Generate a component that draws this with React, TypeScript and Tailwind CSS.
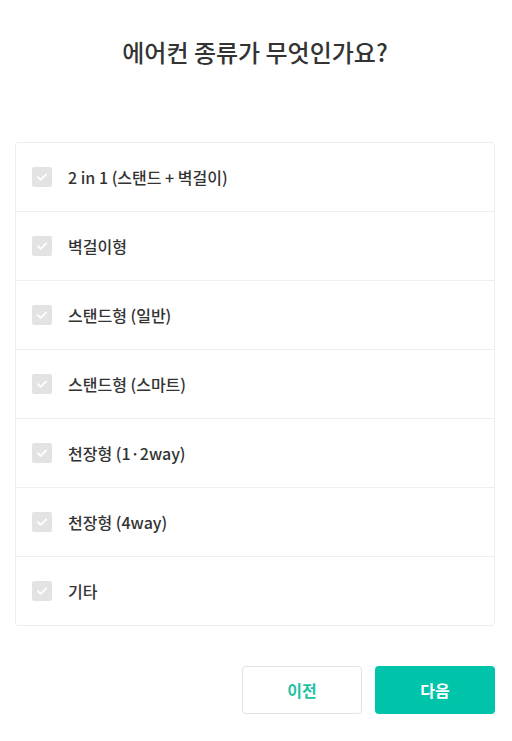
const options = [
  "2 in 1 (스탠드 + 벽걸이)",
  "벽걸이형",
  "스탠드형 (일반)",
  "스탠드형 (스마트)",
  "천장형 (1·2way)",
  "천장형 (4way)",
  "기타",
];

function CheckIcon() {
  return (
    <svg viewBox="0 0 20 20" className="h-5 w-5 shrink-0">
      <rect width="20" height="20" rx="2" fill="#e3e3e3" />
      <path d="M6 10.2l2.6 2.6L14.2 7.4" fill="none" stroke="#ffffff" strokeWidth="1.8" strokeLinecap="round" strokeLinejoin="round" />
    </svg>
  );
}

export default function App() {
  return (
    <div
      className="min-h-[741px] w-full bg-white pl-[15px] pr-[17px] text-[#333]"
      style={{ fontFamily: '"Noto Sans CJK KR", "Noto Sans", sans-serif' }}
    >
      <h1 className="pt-[34px] text-center text-[24px] font-medium leading-[36px] text-[#333]">
        에어컨 종류가 무엇인가요?
      </h1>
      <ul className="mt-[72px] rounded-[3px] border border-[#eeeeee]">
        {options.map((label, i) => (
          <li
            key={label}
            className={`flex items-center gap-[16px] px-[16px] ${i > 0 ? "h-[69px] border-t border-[#eeeeee]" : "h-[68px]"}`}
          >
            <CheckIcon />
            <span className="text-[16px] font-medium text-[#333]">{label}</span>
          </li>
        ))}
      </ul>
      <div className="mt-[40px] flex justify-end gap-[13px]">
        <button className="h-[48px] w-[120px] rounded-[4px] border border-[#e2e2e2] bg-white text-[16px] font-bold text-[#1fc1a4]">
          이전
        </button>
        <button className="h-[48px] w-[120px] rounded-[4px] bg-[#00c4a9] text-[16px] font-bold text-white">
          다음
        </button>
      </div>
    </div>
  );
}
